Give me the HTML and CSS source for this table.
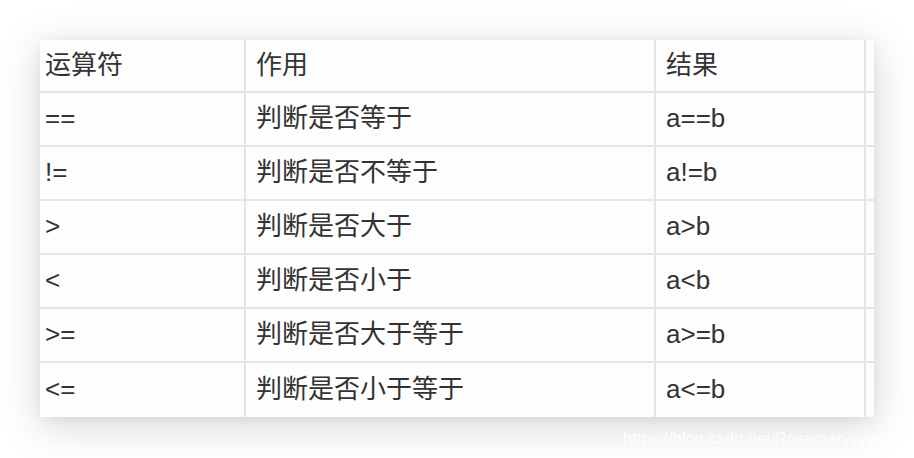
FILE: index.html
```html
<!DOCTYPE html>
<html lang="zh-CN">
<head>
<meta charset="utf-8">
<link rel="stylesheet" href="styles.css">
</head>
<body>
<div class="page">
  <div class="table">
    <div class="cell c1">运算符</div><div class="cell">作用</div><div class="cell">结果</div><div class="cell c4"></div>
    <div class="cell c1">==</div><div class="cell">判断是否等于</div><div class="cell">a==b</div><div class="cell c4"></div>
    <div class="cell c1">!=</div><div class="cell">判断是否不等于</div><div class="cell">a!=b</div><div class="cell c4"></div>
    <div class="cell c1">&gt;</div><div class="cell">判断是否大于</div><div class="cell">a&gt;b</div><div class="cell c4"></div>
    <div class="cell c1">&lt;</div><div class="cell">判断是否小于</div><div class="cell">a&lt;b</div><div class="cell c4"></div>
    <div class="cell c1">&gt;=</div><div class="cell">判断是否大于等于</div><div class="cell">a&gt;=b</div><div class="cell c4"></div>
    <div class="cell c1 last">&lt;=</div><div class="cell last">判断是否小于等于</div><div class="cell last">a&lt;=b</div><div class="cell c4 last"></div>
  </div>
  <div class="watermark">https://blog.csdn.net/Rosemaryyyyyy</div>
</div>
</body>
</html>
```
FILE: styles.css
```css
html, body {
  margin: 0;
  padding: 0;
  background: #ffffff;
}
.page {
  position: relative;
  width: 914px;
  height: 458px;
  overflow: hidden;
  padding: 40px 0 0 40px;
  box-sizing: border-box;
}
.table {
  display: grid;
  width: 834px;
  grid-template-columns: 206px 410px 210px 8px;
  grid-template-rows: 53px repeat(6, 54px);
  background: #fdfdfd;
  box-shadow: 0 8px 40px rgba(0, 0, 0, 0.17), 0 2px 10px rgba(0, 0, 0, 0.05);
  font-family: "Liberation Sans", "Noto Sans CJK SC", sans-serif;
  font-size: 26px;
  line-height: 30px;
  color: #333333;
}
.cell {
  box-sizing: border-box;
  display: flex;
  align-items: center;
  padding: 0 10px 2px 10px;
  border-right: 2px solid #e6e6e6;
  border-bottom: 2px solid #e6e6e6;
  white-space: nowrap;
}
.cell.c1 {
  padding-left: 5px;
}
.cell.c4 {
  border-right: none;
  padding: 0;
}
.cell.last {
  border-bottom: none;
}
.watermark {
  position: absolute;
  left: 623px;
  top: 429px;
  font-family: "Liberation Sans", Arial, sans-serif;
  font-size: 16.5px;
  color: rgba(255, 255, 255, 0.85);
  white-space: nowrap;
}
```
